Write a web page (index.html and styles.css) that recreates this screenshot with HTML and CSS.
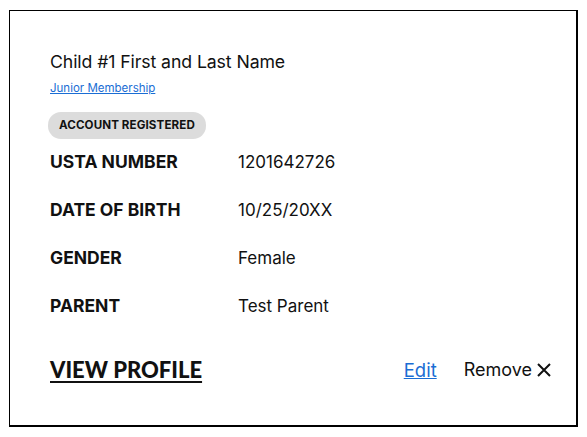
FILE: index.html
```html
<!DOCTYPE html>
<html>
<head>
<meta charset="utf-8">
<link rel="stylesheet" href="styles.css">
</head>
<body>
<div class="card">
  <div class="name">Child #1 First and Last Name</div>
  <a class="plan" href="#">Junior Membership</a>
  <div class="badge">ACCOUNT REGISTERED</div>
  <dl class="details">
    <dt>USTA NUMBER</dt><dd>1201642726</dd>
    <dt>DATE OF BIRTH</dt><dd>10/25/20XX</dd>
    <dt>GENDER</dt><dd>Female</dd>
    <dt>PARENT</dt><dd>Test Parent</dd>
  </dl>
  <div class="actions">
    <a class="view" href="#">VIEW PROFILE</a>
    <div class="right">
      <a class="edit" href="#">Edit</a>
      <span class="remove">Remove
        <svg class="x" width="14" height="14" viewBox="0 0 14 14"><path d="M1 1 L13 13 M13 1 L1 13" stroke="#111" stroke-width="2" fill="none"/></svg>
      </span>
    </div>
  </div>
</div>
</body>
</html>
```
FILE: styles.css
```css
html, body { margin: 0; padding: 0; background: #fff; }
body { padding: 10px 0 0 9px; font-family: Inter, "Noto Sans", sans-serif; color: #111; }
.card {
  box-sizing: border-box;
  width: 569px;
  height: 417px;
  border: 1px solid #000;
  border-right-width: 2px;
  border-bottom-width: 2px;
  padding: 40px 25px 0 40px;
}
.name { font-size: 17.7px; line-height: 22px; letter-spacing: -0.1px; }
.plan { display: inline-block; margin-top: 8px; font-size: 11.5px; line-height: 14px; color: #1a6dd4; text-decoration: underline; }
.badge {
  display: table;
  margin-top: 16px;
  margin-left: -2px;
  height: 26px;
  line-height: 27px;
  padding: 0 11px 0 11px;
  border-radius: 13px;
  background: #dcdcdc;
  font-size: 11.6px;
  font-weight: 700;
  letter-spacing: 0.1px;
}
.details {
  display: grid;
  grid-template-columns: 188px auto;
  row-gap: 24px;
  margin: 11px 0 0;
  font-size: 17px;
  line-height: 24px;
}
.details dt { font-weight: 700; margin: 0; font-size: 17.5px; }
.details dd { margin: 0; }
.actions {
  display: flex;
  justify-content: space-between;
  align-items: center;
  margin-top: 38px;
}
.view { font-family: Lato, sans-serif; font-weight: 900; font-size: 22px; color: #111; text-decoration: underline; text-underline-offset: 3px; }
.right { display: flex; align-items: center; gap: 27px; }
.edit { font-size: 18.5px; color: #1a6dd4; text-decoration: underline; }
.remove { display: flex; align-items: center; gap: 5px; font-size: 18px; }
```
